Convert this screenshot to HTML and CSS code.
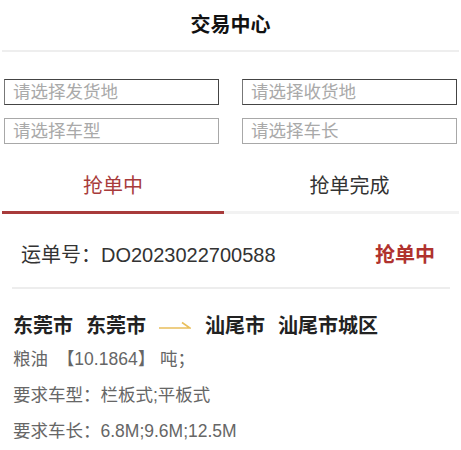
FILE: index.html
```html
<!DOCTYPE html>
<html>
<head>
  <meta charset="utf-8">
  <title>交易中心</title>
  <link rel="stylesheet" href="styles.css">
</head>
<body>
  <div class="topbar">
    <h1>交易中心</h1>
  </div>

  <div class="filters">
    <input class="field field-dark" type="text" placeholder="请选择发货地">
    <input class="field field-dark" type="text" placeholder="请选择收货地">
    <input class="field" type="text" placeholder="请选择车型">
    <input class="field" type="text" placeholder="请选择车长">
  </div>

  <div class="tabs">
    <div class="tab active">抢单中</div>
    <div class="tab tab-right">抢单完成</div>
  </div>

  <div class="order">
    <div class="order-head">
      <span class="order-no">运单号：DO2023022700588</span>
      <span class="order-status">抢单中</span>
    </div>

    <div class="route">
      <span class="city">东莞市</span>
      <span class="city">东莞市</span>
      <svg class="arrow" width="32" height="10" viewBox="0 0 32 10">
        <path d="M0 7 H31 L23 1.5" fill="none" stroke="#e9bf5c" stroke-width="1.6"/>
      </svg>
      <span class="city">汕尾市</span>
      <span class="city">汕尾市城区</span>
    </div>

    <div class="info">粮油 <span class="weight">【10.1864】</span> 吨；</div>
    <div class="info">要求车型：栏板式;平板式</div>
    <div class="info">要求车长：6.8M;9.6M;12.5M</div>
  </div>
</body>
</html>
```

FILE: styles.css
```css
* {
  margin: 0;
  padding: 0;
  box-sizing: border-box;
}

body {
  font-family: "Liberation Sans", "Noto Sans CJK SC", sans-serif;
  background: #fff;
  color: #333;
  width: 461px;
}

.topbar {
  height: 52px;
  margin: 0 2px;
  border-bottom: 2px solid #eeeeee;
  text-align: center;
}

.topbar h1 {
  font-size: 20px;
  font-weight: 700;
  color: #111;
  line-height: 50px;
}

.filters {
  display: grid;
  grid-template-columns: 215px 215px;
  column-gap: 23px;
  row-gap: 13px;
  padding: 27px 4px 0;
}

.field {
  height: 26px;
  border: 1px solid #a8a8a8;
  border-radius: 0;
  padding: 0 8px;
  font-family: inherit;
  font-size: 17.5px;
  color: #333;
  outline: none;
  background: #fff;
}

.field-dark {
  border-color: #444;
  border-left-color: #777;
}

.field::placeholder {
  color: #a9a9a9;
}

.tabs {
  display: flex;
  margin-top: 20px;
  padding: 0 2px;
}

.tab {
  line-height: 44px;
  padding-bottom: 3px;
  font-size: 20px;
  color: #333;
  text-align: center;
  border-bottom: 3px solid #f2f2f2;
}

.tab.active {
  width: 222px;
  color: #a83b3b;
  border-bottom-color: #a83b3b;
}

.tab-right {
  flex: 1;
  padding-left: 16px;
}

.order {
  padding: 0 11px 0 12px;
}

.order-head {
  display: flex;
  justify-content: space-between;
  padding: 27px 15px 18px 9px;
  line-height: 28px;
  border-bottom: 2px solid #ededed;
}

.order-no {
  font-size: 20px;
  color: #333;
}

.order-status {
  font-size: 20px;
  font-weight: 700;
  color: #b0322e;
}

.route {
  display: flex;
  align-items: center;
  margin-top: 22px;
  padding-left: 1px;
  line-height: 30px;
  font-size: 20px;
  font-weight: 700;
  color: #222;
}

.city {
  margin-right: 13px;
}

.arrow {
  margin-right: 14px;
}

.info {
  padding-left: 1px;
  line-height: 36px;
  font-size: 17.5px;
  color: #666;
}

.info-value {
  letter-spacing: 0.3px;
}

.weight {
  margin-left: 4px;
}
```
